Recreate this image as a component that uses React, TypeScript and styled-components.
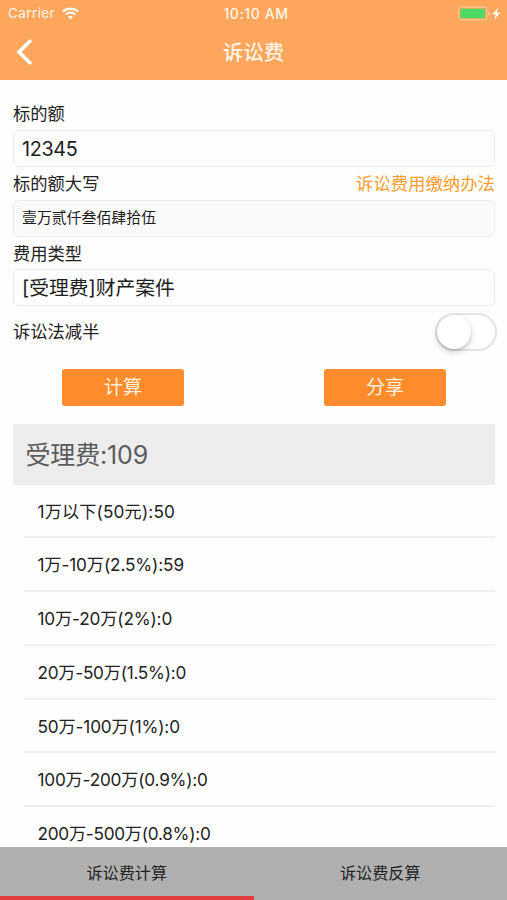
import React from 'react';
import styled, { createGlobalStyle } from 'styled-components';

const Global = createGlobalStyle`
  *, *::before, *::after { box-sizing: border-box; }
  html, body { margin: 0; padding: 0; background: #fff; }
  body { overflow: hidden; font-family: Inter, "Noto Sans CJK SC", sans-serif; color: #222; }
  button { font: inherit; border: 0; padding: 0; margin: 0; background: none; color: inherit; }
`;

const Screen = styled.div`
  width: 507px;
  height: 900px;
  display: flex;
  flex-direction: column;
  overflow: hidden;
  background: #fefefe;
`;

const Header = styled.header`
  height: 79.5px;
  flex: none;
  background: #fea65c;
  color: #fff5e8;
`;

const StatusBar = styled.div`
  height: 27px;
  display: grid;
  grid-template-columns: 1fr auto 1fr;
  align-items: center;
  padding: 0 5px 0 8px;
  font-size: 13.5px;
  line-height: 27px;
`;

const Carrier = styled.div`
  display: flex;
  align-items: center;
  gap: 7px;
  letter-spacing: 0.4px;
`;

const Clock = styled.div`
  font-weight: 500;
  font-size: 14px;
  padding-left: 2px;
  letter-spacing: 0.6px;
`;

const Power = styled.div`
  display: flex;
  justify-content: flex-end;
`;

const NavBar = styled.div`
  height: 52px;
  display: grid;
  grid-template-columns: 60px 1fr 60px;
  align-items: center;
`;

const BackButton = styled.button`
  display: flex;
  padding-left: 13.5px;
`;

const Title = styled.h1`
  margin: 0;
  text-align: center;
  font-size: 20.5px;
  line-height: 52px;
  font-weight: 500;
`;

const Form = styled.main`
  flex: 1;
  min-height: 0;
  overflow: hidden;
  padding: 18px 12px 0 13px;
`;

const LabelRow = styled.div<{ $height: number }>`
  height: ${p => p.$height}px;
  display: flex;
  justify-content: space-between;
  align-items: center;
  padding-top: 1px;
  font-size: 17.3px;
  line-height: 32px;
`;

const RuleLink = styled.a`
  color: #fb9d2c;
  font-size: 17.4px;
`;

const Field = styled.div<{ $readOnly?: boolean; $tracking?: number }>`
  height: 37px;
  display: flex;
  align-items: center;
  padding-left: 8px;
  border: 1px solid #ebebeb;
  border-radius: 6px;
  background: ${p => (p.$readOnly ? '#fafafa' : '#fefefe')};
  font-size: ${p => (p.$readOnly ? 14.9 : 19.8)}px;
  letter-spacing: ${p => p.$tracking ?? 0}px;
  line-height: 35px;
  color: #1c1c1c;
`;

const FieldText = styled.span<{ $shift: number }>`
  padding-top: ${p => Math.max(p.$shift, 0)}px;
  padding-bottom: ${p => Math.max(-p.$shift, 0)}px;
`;

const Switch = styled.button`
  width: 62px;
  height: 38px;
  margin-right: -2px;
  border: 2px solid #e4e4e4;
  border-radius: 19px;
  background: #fff;
`;

const Knob = styled.span`
  display: block;
  width: 34px;
  height: 34px;
  border-radius: 50%;
  background: #fff;
  box-shadow: 0 3px 6px rgba(0, 0, 0, 0.2), 0 1px 2px rgba(0, 0, 0, 0.1);
`;

const Actions = styled.div`
  display: flex;
  justify-content: space-between;
  padding: 12.5px 49px 0;
  height: 49.5px;
`;

const ActionButton = styled.button`
  width: 122px;
  height: 37px;
  border-radius: 3px;
  background: #fe8c2d;
  color: #fff0de;
  font-size: 19px;
  line-height: 38px;
`;

const Total = styled.div`
  height: 61px;
  margin-top: 18px;
  padding-left: 12.5px;
  background: #ededed;
  color: #5c5c5c;
  font-size: 25px;
  letter-spacing: -0.15px;
  line-height: 62px;
`;

const Tiers = styled.ul`
  list-style: none;
  margin: 0;
  padding: 0 0 0 11px;
`;

const Tier = styled.li<{ $tracking: number }>`
  height: 53.8px;
  padding-left: 13.5px;
  border-bottom: 2px solid #f0f0f0;
  font-size: 17.2px;
  letter-spacing: ${p => p.$tracking}px;
  line-height: 54px;
`;

const TabBar = styled.nav`
  height: 53.5px;
  flex: none;
  display: grid;
  grid-template-columns: 1fr 1fr;
  background: #b0b0b0;
`;

const Tab = styled.button<{ $active?: boolean }>`
  padding-top: 3px;
  border-bottom: 4.5px solid ${p => (p.$active ? '#e43d3d' : 'transparent')};
  font-size: 16.1px;
  line-height: 46px;
  color: #222;
`;

const WifiIcon = () => (
  <svg width="17" height="13" viewBox="0 0 17 13" fill="none" stroke="#fff" strokeWidth="2.1">
    <path d="M1 4.6C5.2.6 11.8.6 16 4.6" />
    <path d="M3.7 7.5c2.8-2.5 6.8-2.5 9.6 0" />
    <path d="M6 9.6c1.5-1.3 3.5-1.3 5 0l-2.5 2.6z" fill="#fff" stroke="none" />
  </svg>
);

const BatteryIcon = () => (
  <svg width="44" height="16" viewBox="0 0 44 16" fill="none">
    <rect x=".7" y="1.2" width="28" height="12.6" rx="2.4" stroke="#ffc590" strokeWidth="1.2" />
    <rect x="2.3" y="2.8" width="24.8" height="9.4" rx="1" fill="#4cd964" />
    <path d="M30.3 5.7q1.5.4 1.5 1.8t-1.5 1.8z" fill="#ffd9b2" />
    <path d="m40 2-5.6 6.3h3.3L36.5 13.6l6-7h-3.6z" fill="#fff" />
  </svg>
);

const BackIcon = () => (
  <svg width="18" height="28" viewBox="0 0 18 28" fill="none" stroke="#fff" strokeWidth="3.7" strokeLinecap="round" strokeLinejoin="miter">
    <path d="M15.8 2.3 5 13 15.8 23.7" />
  </svg>
);

const tiers = [
  { label: '1万以下(50元):50', tracking: 0.14 },
  { label: '1万-10万(2.5%):59', tracking: -0.12 },
  { label: '10万-20万(2%):0', tracking: -0.15 },
  { label: '20万-50万(1.5%):0', tracking: -0.25 },
  { label: '50万-100万(1%):0', tracking: -0.15 },
  { label: '100万-200万(0.9%):0', tracking: -0.2 },
  { label: '200万-500万(0.8%):0', tracking: -0.26 },
];

export default function App() {
  return (
    <Screen>
      <Global />
      <Header>
        <StatusBar>
          <Carrier>Carrier <WifiIcon /></Carrier>
          <Clock>10:10 AM</Clock>
          <Power><BatteryIcon /></Power>
        </StatusBar>
        <NavBar>
          <BackButton aria-label="返回"><BackIcon /></BackButton>
          <Title>诉讼费</Title>
        </NavBar>
      </Header>
      <Form>
        <LabelRow $height={32.5}>标的额</LabelRow>
        <Field $tracking={-0.35}><FieldText $shift={1}>12345</FieldText></Field>
        <LabelRow $height={33}>
          标的额大写
          <RuleLink>诉讼费用缴纳办法</RuleLink>
        </LabelRow>
        <Field $readOnly><FieldText $shift={-1}>壹万贰仟叁佰肆拾伍</FieldText></Field>
        <LabelRow $height={32}>费用类型</LabelRow>
        <Field><FieldText $shift={1}>[受理费]财产案件</FieldText></Field>
        <LabelRow $height={50}>
          诉讼法减半
          <Switch role="switch" aria-checked={false} aria-label="诉讼法减半"><Knob /></Switch>
        </LabelRow>
        <Actions>
          <ActionButton>计算</ActionButton>
          <ActionButton>分享</ActionButton>
        </Actions>
        <Total>受理费:109</Total>
        <Tiers>
          {tiers.map(tier => (
            <Tier key={tier.label} $tracking={tier.tracking}>{tier.label}</Tier>
          ))}
        </Tiers>
      </Form>
      <TabBar>
        <Tab $active>诉讼费计算</Tab>
        <Tab>诉讼费反算</Tab>
      </TabBar>
    </Screen>
  );
}
